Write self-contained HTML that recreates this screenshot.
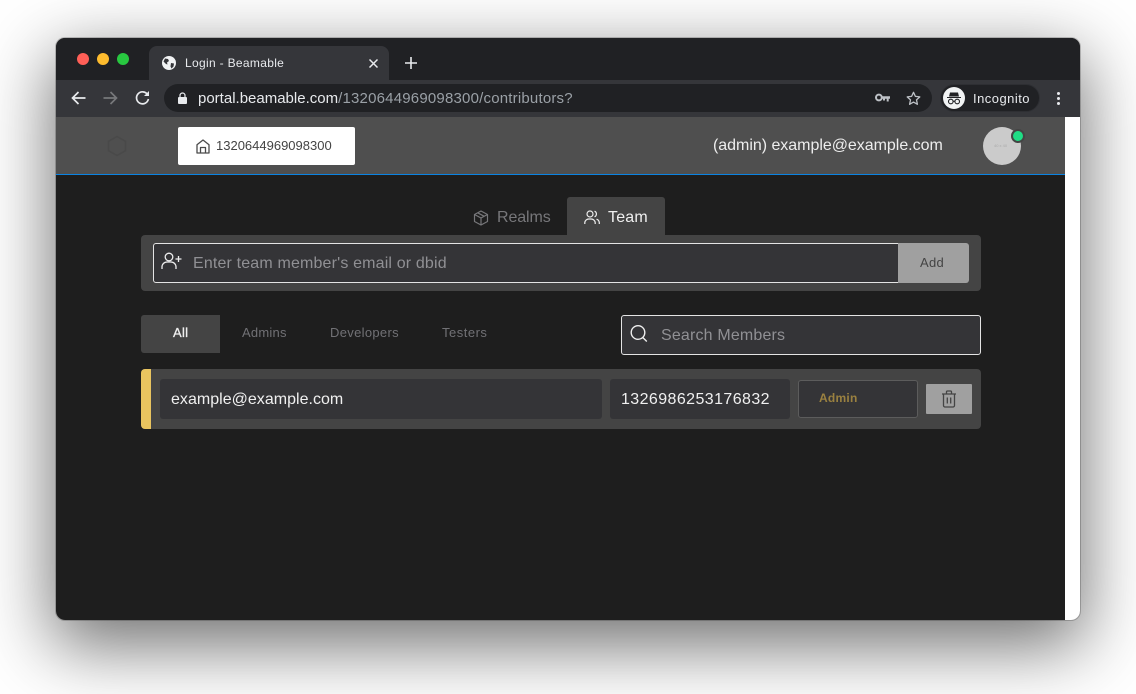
<!DOCTYPE html>
<html lang="en"><head><meta charset="utf-8"><title>Login - Beamable</title>
<style>
html,body{margin:0;padding:0;width:1136px;height:694px;overflow:hidden;background:#fff}
body{position:relative;font-family:"Liberation Sans",sans-serif}
.a{position:absolute;box-sizing:border-box}
.t{position:absolute;white-space:nowrap;line-height:20px;height:20px}
svg{position:absolute;overflow:visible;fill:none}
</style></head><body>
<div class="a" style="left:56px;top:38px;width:1024px;height:582px;border-radius:9px;box-shadow:0 22px 70px 4px rgba(0,0,0,.56),0 0 0 1px rgba(0,0,0,.2)"></div>
<div class="a" style="left:56px;top:38px;width:1024px;height:582px;border-radius:9px;overflow:hidden;background:#1e1e1e">
 <div class="a" style="left:0;top:0;width:1024px;height:42px;background:#202124"></div>
 <div class="a" style="left:0;top:42px;width:1024px;height:37px;background:#35363a"></div>
 <div class="a" style="left:93px;top:8px;width:240px;height:34px;background:#35363a;border-radius:8px 8px 0 0"></div>
 <div class="a" style="left:0;top:79px;width:1009px;height:57px;background:#4f4f4f"></div>
 <div class="a" style="left:0;top:136px;width:1009px;height:1px;background:#0b84e3"></div>
 <div class="a" style="left:1009px;top:79px;width:15px;height:503px;background:#fff"></div>
</div>
<div class="a" style="left:77px;top:53px;width:12px;height:12px;border-radius:50%;background:#ff5f57"></div>
<div class="a" style="left:97px;top:53px;width:12px;height:12px;border-radius:50%;background:#febc2e"></div>
<div class="a" style="left:117px;top:53px;width:12px;height:12px;border-radius:50%;background:#28c840"></div>
<svg style="left:162px;top:56px" width="14" height="14" viewBox="0 0 14 14"><circle cx="7" cy="7" r="7" fill="#f1f3f4"/><path d="M3 2.500l3 .5 1 2-2 1.500.5 2-1.500-.5-2.500-2.500zM9 7l3 .5-.500 3-2 2-1-2z" fill="#35363a"/></svg>
<div class="t" style="left:185px;top:52.500px;font-size:12px;color:#e8eaed;letter-spacing:.32px">Login - Beamable</div>
<svg style="left:369px;top:59px" width="9" height="9" viewBox="0 0 9 9"><path d="M.5.500l8 8M8.500.500l-8 8" stroke="#e8eaed" stroke-width="1.500"/></svg>
<svg style="left:405px;top:57px" width="12" height="12" viewBox="0 0 12 12"><path d="M6 0v12M0 6h12" stroke="#e8eaed" stroke-width="1.600"/></svg>
<svg style="left:71px;top:91px" width="15" height="14" viewBox="0 0 15 14"><path d="M14.500 7H1.500M7.500 1L1.500 7l6 6" stroke="#e8eaed" stroke-width="1.700"/></svg>
<svg style="left:103px;top:91px" width="15" height="14" viewBox="0 0 15 14"><path d="M.5 7h13M7.500 1l6 6-6 6" stroke="#77787b" stroke-width="1.700"/></svg>
<svg style="left:135px;top:90px" width="15" height="15" viewBox="0 0 15 15"><path d="M12.500 4.500A6 6 0 1 0 13.400 9" stroke="#e8eaed" stroke-width="1.700"/><path d="M14 1v5H9z" fill="#e8eaed"/></svg>
<div class="a" style="left:164px;top:84px;width:768px;height:28px;border-radius:14px;background:#202124"></div>
<svg style="left:178px;top:92px" width="9" height="12" viewBox="0 0 9 12"><path d="M2 5V3.500a2.500 2.500 0 0 1 5 0V5" stroke="#e8eaed" stroke-width="1.200"/><rect y="5" width="9" height="7" rx="1" fill="#e8eaed"/></svg>
<div class="t" style="left:198px;top:89px;font-size:15px;color:#e8eaed">portal.beamable.com<span style="color:#9aa0a6;letter-spacing:.2px">/1320644969098300/contributors?</span></div>
<svg style="left:875px;top:93px" width="15" height="10" viewBox="0 0 15 10"><circle cx="3.900" cy="4.500" r="2.900" stroke="#bdc1c6" stroke-width="2"/><path d="M6 3.200h9v2.600h-1.300V8.500H11.700V5.800H10V7.500H8V5.800H6z" fill="#bdc1c6"/></svg>
<svg style="left:906px;top:91px" width="15" height="15" viewBox="0 0 15 15"><path d="M7.500 1.300l1.900 4.100 4.400.5-3.300 3 .9 4.400-3.900-2.200-3.900 2.200.9-4.400-3.300-3 4.400-.5z" stroke="#bdc1c6" stroke-width="1.300" stroke-linejoin="round"/></svg>
<div class="a" style="left:940px;top:84px;width:100px;height:28px;border-radius:14px;background:#202124;border:1px solid #2e2f33"></div>
<div class="a" style="left:943px;top:87px;width:22px;height:22px;border-radius:50%;background:#f1f3f4"></div>
<svg style="left:943px;top:87px" width="22" height="22" viewBox="0 0 22 22"><path d="M7 5.500h8l1 4H6zM4 10h14v1H4z" fill="#202124"/><circle cx="7.800" cy="14.500" r="2.300" stroke="#202124" stroke-width="1.100"/><circle cx="14.200" cy="14.500" r="2.300" stroke="#202124" stroke-width="1.100"/><path d="M10 14.300h2" stroke="#202124"/></svg>
<div class="t" style="left:973px;top:88.500px;font-size:13px;color:#e8eaed;letter-spacing:.47px">Incognito</div>
<div class="a" style="left:1057px;top:92px;width:3px;height:3px;border-radius:50%;background:#e8eaed;box-shadow:0 5px 0 #e8eaed,0 10px 0 #e8eaed"></div>

<svg style="left:107px;top:135px" width="20" height="22" viewBox="0 0 20 22"><path d="M10 1.500l8.500 4.800v9.400L10 20.500l-8.500-4.800V6.300z" stroke="#494949" stroke-width="1.500"/></svg>
<div class="a" style="left:178px;top:127px;width:177px;height:38px;background:#fff;border-radius:2px"></div>
<svg style="left:196px;top:139px" width="14" height="15" viewBox="0 0 14 15"><path d="M1 5.700L7 1l6 4.700V14H1zM4.500 14V8.500h5V14" stroke="#4a4a4a" stroke-width="1.300" stroke-linejoin="round"/></svg>
<div class="t" style="left:216px;top:136px;font-size:13px;color:#444">1320644969098300</div>
<div class="t" style="left:713px;top:136px;font-size:16px;color:#ededed;letter-spacing:-.03px">(admin) example@example.com</div>
<div class="a" style="left:983px;top:127px;width:38px;height:38px;border-radius:50%;background:#cbcbcb"></div>
<div class="t" style="left:994px;top:136px;font-size:4px;color:#aaa">40 x 40</div>
<div class="a" style="left:1011px;top:129px;width:14px;height:14px;border-radius:50%;background:#1fdd85;border:2px solid #444"></div>

<div class="a" style="left:567px;top:197px;width:98px;height:38px;background:#444;border-radius:3px 3px 0 0"></div>
<svg style="left:473px;top:210px" width="16" height="16" viewBox="0 0 16 16"><path d="M8 1l6.500 3.500v7L8 15l-6.500-3.500v-7zM1.500 4.500L8 8l6.500-3.500M8 8v7M4.700 2.800l6.500 3.500" stroke="#77777a" stroke-width="1.200" stroke-linejoin="round"/></svg>
<div class="t" style="left:497px;top:208px;font-size:16px;color:#77777a;letter-spacing:-.1px">Realms</div>
<svg style="left:584px;top:210px" width="16" height="15" viewBox="0 0 16 15"><circle cx="6" cy="4" r="3" stroke="#eee" stroke-width="1.200"/><path d="M.8 14v-1.500A4 4 0 0 1 5 9h2a4 4 0 0 1 4.200 3.500V14M10.500 1.200a3 3 0 0 1 0 5.600M12.500 9.200a4 4 0 0 1 2.800 3.300V14" stroke="#eee" stroke-width="1.200"/></svg>
<div class="t" style="left:608px;top:208px;font-size:16px;color:#f0f0f0;letter-spacing:.2px">Team</div>

<div class="a" style="left:141px;top:235px;width:840px;height:56px;background:#444;border-radius:4px"></div>
<div class="a" style="left:153px;top:243px;width:746px;height:40px;background:#343437;border:1px solid #e4e4e4;border-radius:3px 0 0 3px"></div>
<svg style="left:161px;top:252px" width="21" height="18" viewBox="0 0 21 18"><circle cx="8" cy="5" r="3.800" stroke="#eee" stroke-width="1.300"/><path d="M1 17v-2a5 5 0 0 1 5-5h4a5 5 0 0 1 5 5v2M14.500 7h6M17.500 4v6" stroke="#eee" stroke-width="1.300"/></svg>
<div class="t" style="left:193px;top:254px;font-size:16px;color:#909094;letter-spacing:.16px">Enter team member's email or dbid</div>
<div class="a" style="left:898px;top:243px;width:71px;height:40px;background:#a0a0a0;border-radius:0 3px 3px 0"></div>
<div class="t" style="left:920px;top:252.500px;font-size:13px;color:#444;letter-spacing:.3px">Add</div>

<div class="a" style="left:141px;top:315px;width:79px;height:38px;background:#444;border-radius:3px 0 0 3px"></div>
<div class="t" style="left:173px;top:322.500px;font-size:13px;color:#eee;letter-spacing:.3px;-webkit-text-stroke:.3px #eee">All</div>
<div class="t" style="left:242px;top:322.500px;font-size:13px;color:#717175;letter-spacing:.22px">Admins</div>
<div class="t" style="left:330px;top:322.500px;font-size:13px;color:#717175;letter-spacing:.32px">Developers</div>
<div class="t" style="left:442px;top:322.500px;font-size:13px;color:#717175;letter-spacing:.5px">Testers</div>
<div class="a" style="left:621px;top:315px;width:360px;height:40px;background:#343437;border:1px solid #e4e4e4;border-radius:3px"></div>
<svg style="left:630px;top:325px" width="18" height="18" viewBox="0 0 18 18"><circle cx="8" cy="7.500" r="6.800" stroke="#eee" stroke-width="1.400"/><path d="M12.800 12.500l4 4" stroke="#eee" stroke-width="1.400"/></svg>
<div class="t" style="left:661px;top:326px;font-size:16px;color:#909094;letter-spacing:.17px">Search Members</div>

<div class="a" style="left:141px;top:369px;width:840px;height:60px;background:#444;border-radius:4px"></div>
<div class="a" style="left:141px;top:369px;width:10px;height:60px;background:#e9c45f;border-radius:4px 0 0 4px"></div>
<div class="a" style="left:160px;top:379px;width:442px;height:40px;background:#343437;border-radius:3px"></div>
<div class="t" style="left:171px;top:390px;font-size:16px;color:#f0f0f0;letter-spacing:.02px">example@example.com</div>
<div class="a" style="left:610px;top:379px;width:180px;height:40px;background:#343437;border-radius:3px"></div>
<div class="t" style="left:621px;top:390px;font-size:16px;color:#f0f0f0;letter-spacing:.41px">1326986253176832</div>
<div class="a" style="left:798px;top:380px;width:120px;height:38px;background:#343437;border:1px solid #5c5c5c;border-radius:3px"></div>
<div class="t" style="left:819px;top:388px;font-size:12px;font-weight:700;color:#9a8140;letter-spacing:.25px">Admin</div>
<div class="a" style="left:926px;top:384px;width:46px;height:30px;background:#a0a0a0;border-radius:1px"></div>
<svg style="left:941px;top:390px" width="16" height="18" viewBox="0 0 16 18"><path d="M1 4h14M5.500 4V2a1 1 0 0 1 1-1h3a1 1 0 0 1 1 1v2M2.500 4v11.500a1.500 1.500 0 0 0 1.500 1.500h8a1.500 1.500 0 0 0 1.500-1.500V4M6.300 7.500v6M9.700 7.500v6" stroke="#444" stroke-width="1.300"/></svg>
</body></html>
